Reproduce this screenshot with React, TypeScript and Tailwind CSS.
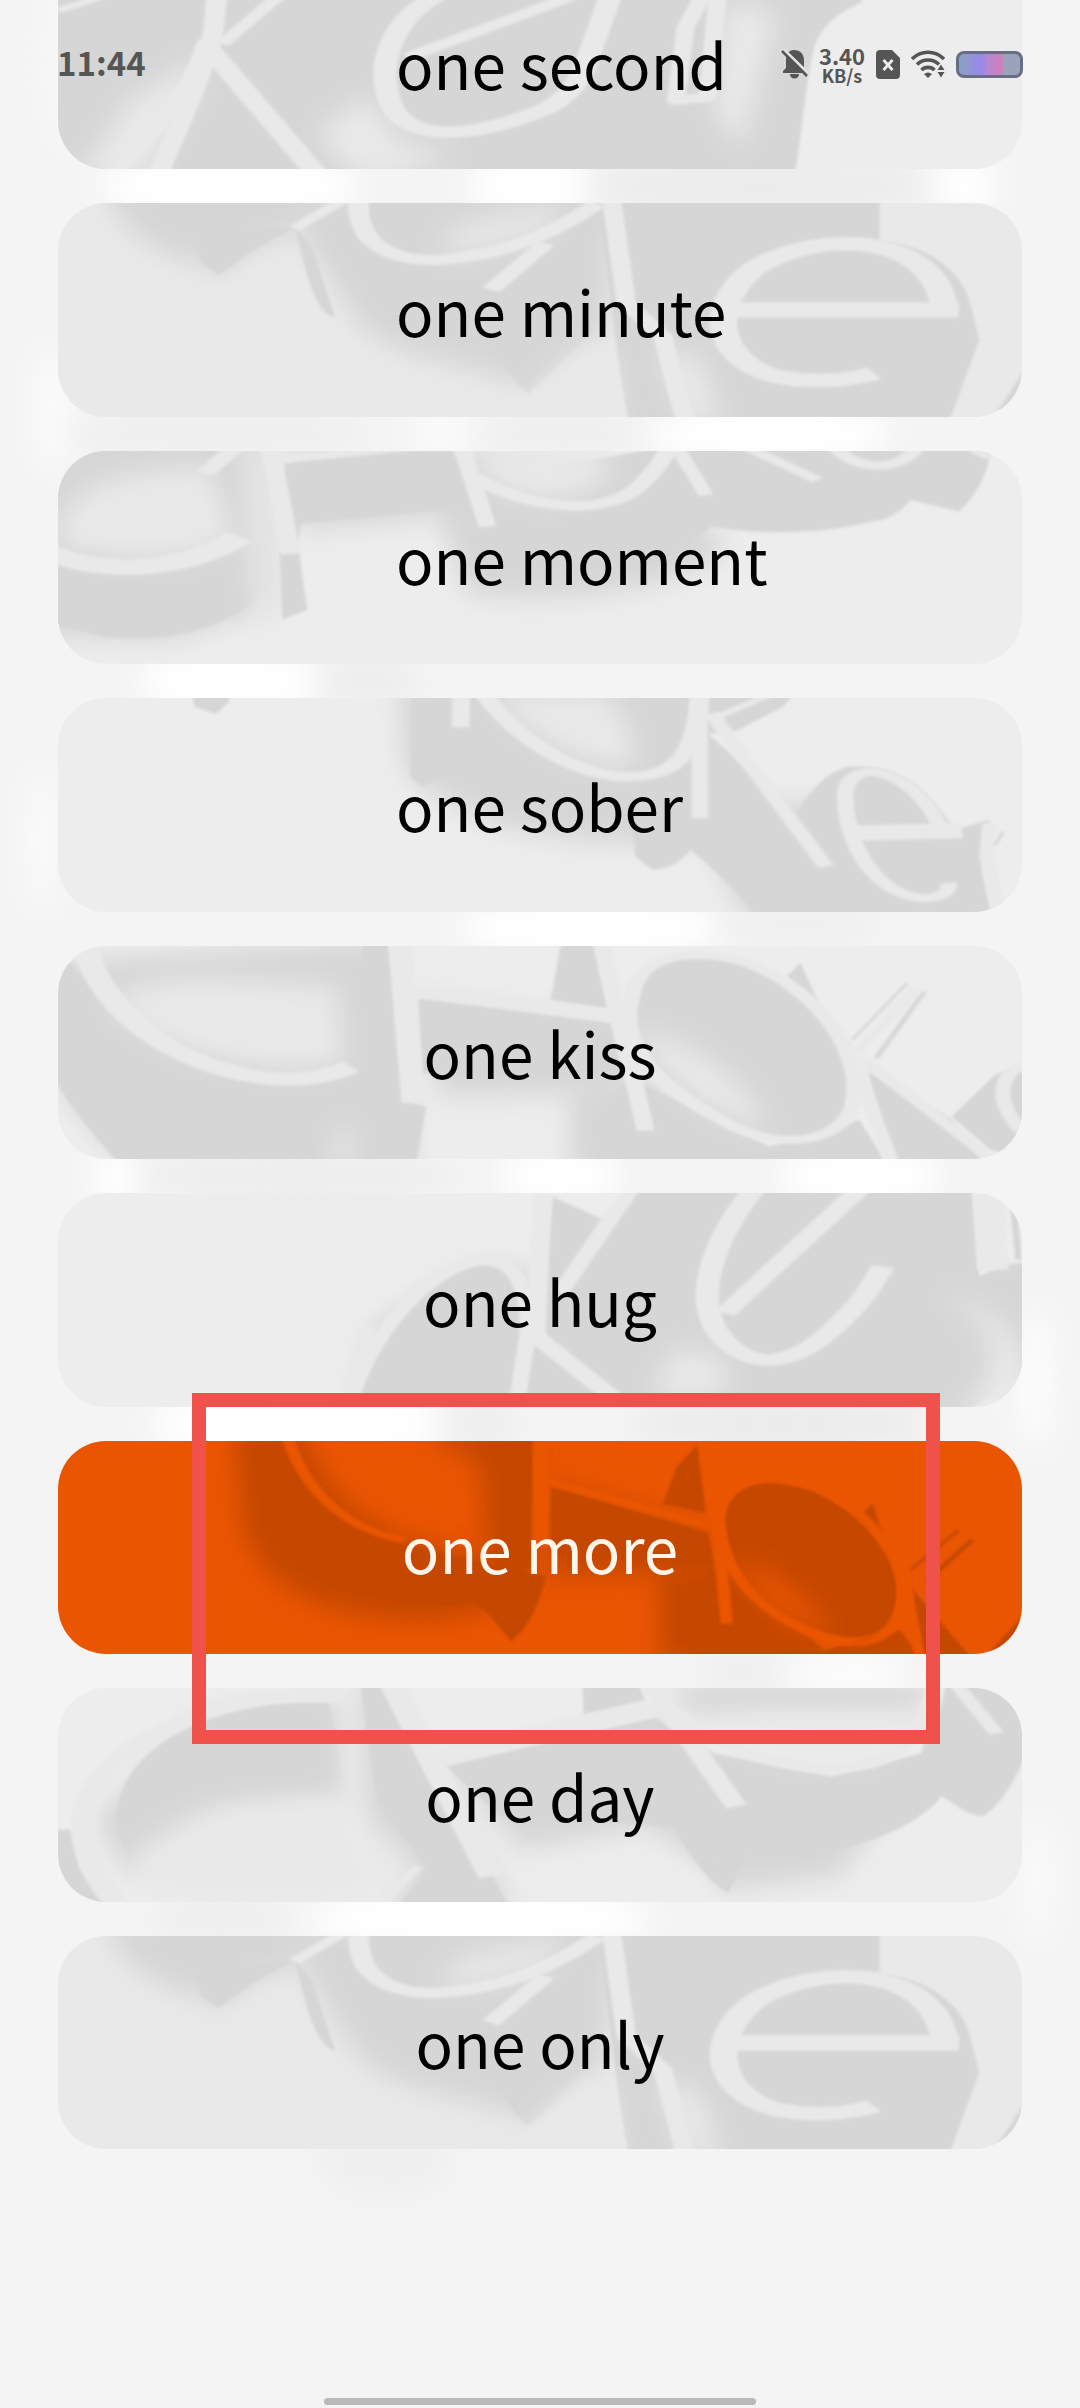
import React from "react";

/* Layer kinds: s = soft shadow, d = crisp side face, g = soft glow,
   l = front face of a letter (stroke), t = thin groove (stroke). */
type Layer = ["s" | "d" | "g", string] | ["l" | "t", string, number];

type Art = { top: number; layers: Layer[] };

const second: Art = {
  top: -134,
  layers: [
    ["d", "M60,-150 L1254,-150 L1254,5 C1215,40 1195,80 1185,140 C1172,250 1168,400 1155,540 L60,540 Z"],
    ["g", "M150,430 L190,300 L290,180 L290,260 L210,540 L110,540 Z"],
    ["g", "M465,385 L540,290 L580,420 L660,470 L560,540 L500,500 Z"],
    ["g", "M1060,0 L1130,40 L1110,200 L1080,440 L1040,330 L1050,120 Z"],
    ["l", "M86,30 C105,15 130,5 150,-15", 16],
    ["l", "M317,-20 L312,90 C300,200 270,340 228,540", 30],
    ["l", "M300,120 C270,300 230,400 160,530", 22],
    ["l", "M325,130 L410,-20", 22],
    ["l", "M300,130 L470,540", 34],
    ["l", "M636,-15 C570,60 545,200 572,320 C600,430 700,410 800,320 C850,260 850,200 890,-20", 34],
    ["l", "M595,170 L835,-15", 26],
    ["l", "M1025,-20 L998,80 L984,300 L1030,290 L1045,-20", 26],
  ],
};

const minute: Art = {
  top: 129,
  layers: [
    ["s", "M150,60 L480,60 L440,220 C400,230 360,260 325,340 L270,300 C210,260 170,200 150,60 Z"],
    ["d", "M285,220 L430,200 L370,270 L320,345 L295,310 Z"],
    ["s", "M430,110 L900,60 L880,520 L770,680 C700,620 560,600 520,480 L450,260 Z"],
    ["d", "M430,200 L455,260 L489,472 C470,470 455,400 445,320 Z"],
    ["d", "M520,110 L860,110 L860,520 L770,700 C740,660 730,560 690,500 C600,420 540,300 510,150 Z"],
    ["d", "M870,110 L1280,110 L1280,245 C1350,250 1400,340 1410,420 L1425,540 L1380,790 L915,790 L900,600 Z"],
    ["d", "M1500,600 L1440,790 L1500,790 Z"],
    ["g", "M850,560 L885,560 L905,790 L740,790 L775,700 Z"],
    ["g", "M630,270 L680,190 L830,129 L790,220 L700,270 Z"],
    ["g", "M960,560 L1020,600 L1050,790 L1000,790 Z"],
    ["l", "M500,120 L430,205", 20],
    ["l", "M524,110 C515,250 570,305 640,300 C730,285 800,230 870,130", 30],
    ["l", "M795,250 L715,390", 28],
    ["l", "M890,110 L912,430 L965,530 L1000,800", 28],
    ["l", "M1375,450 C1360,210 1180,210 1095,330 C1030,440 1040,600 1130,650 C1180,670 1230,665 1272,640", 40],
    ["l", "M1065,450 L1395,450", 46],
    ["l", "M1500,480 C1460,600 1430,700 1400,800", 44],
  ],
};

const moment: Art = {
  top: 93,
  layers: [
    ["s", "M60,70 L390,70 L400,560 L250,660 L60,650 Z"],
    ["d", "M60,70 L335,70 L315,140 C200,130 120,180 60,300 Z"],
    ["d", "M60,430 L200,465 L350,375 L372,545 C310,640 230,670 150,650 L60,600 Z"],
    ["g", "M90,300 C120,180 210,140 310,150 L340,360 C270,430 160,420 90,380 Z"],
    ["g", "M355,93 L385,93 L400,620 L375,640 Z"],
    ["s", "M410,110 L660,80 L960,200 L1060,380 C1000,520 800,560 680,520 L640,290 L440,330 Z"],
    ["d", "M415,130 L600,93 L660,93 L690,270 C600,270 520,300 440,310 L430,400 L415,400 Z"],
    ["d", "M408,400 L436,390 L448,570 L412,600 Z"],
    ["d", "M690,180 L1000,70 L1442,70 C1440,160 1420,230 1395,275 L1325,240 C1310,280 1290,300 1270,305 C1190,345 1100,345 1035,320 C1020,380 860,400 690,370 L700,300 Z"],
    ["g", "M690,93 L885,93 L880,190 L800,240 L720,200 Z"],
    ["l", "M300,160 L345,80", 28],
    ["l", "M70,395 C150,470 270,455 350,350", 46],
    ["l", "M394,80 L425,402", 28],
    ["l", "M410,118 L590,80", 22],
    ["l", "M673,80 L710,320", 26],
    ["l", "M690,170 C770,270 880,290 930,200 C955,150 965,120 975,80", 28],
    ["l", "M985,80 L1028,225", 22],
    ["l", "M1085,80 L1190,180", 20],
    ["l", "M1215,80 C1240,150 1310,160 1335,80", 24],
    ["l", "M1415,90 L1440,112", 16],
  ],
};

const sober: Art = {
  top: 84,
  layers: [
    ["d", "M280,70 L335,70 L335,95 L315,132 L285,110 Z"],
    ["s", "M580,40 L900,60 L1010,520 C900,520 800,520 720,460 L620,360 L590,300 Z"],
    ["s", "M1000,400 L1200,400 L1200,760 L1090,760 Z"],
    ["d", "M600,60 L1160,60 L1140,110 L1065,190 L1030,190 L1160,430 C1180,360 1200,310 1235,290 C1330,280 1360,400 1390,480 L1440,450 L1430,600 L1445,760 L1110,760 C1070,660 1040,600 1005,540 C990,580 970,600 950,600 L925,560 C925,500 920,460 900,440 C820,440 730,340 680,290 L615,350 L598,320 Z"],
    ["g", "M720,70 L885,70 L920,200 L920,290 C850,290 770,200 720,84 Z"],
    ["l", "M672,70 L671,172", 26],
    ["l", "M700,60 C760,230 850,325 920,320 C990,315 1015,240 1018,70", 28],
    ["l", "M1018,70 L1019,445", 24],
    ["l", "M1035,130 L1202,590", 24],
    ["l", "M1040,145 L1125,70", 14],
    ["l", "M1240,490 L1400,482", 46],
    ["l", "M1370,480 C1330,290 1235,260 1230,370 C1230,560 1290,690 1350,685 C1372,680 1382,665 1380,640", 24],
    ["l", "M1440,460 L1436,560 L1455,750", 22],
    ["t", "M1460,485 L1448,525", 5],
  ],
};

const kiss: Art = {
  top: 78,
  layers: [
    ["s", "M60,130 L560,60 L600,540 L600,760 L200,760 L100,540 Z"],
    ["d", "M80,130 L105,130 C150,370 290,500 420,495 L515,470 L530,60 L565,60 L590,545 L621,560 L604,760 L190,760 C130,640 100,540 80,480 Z"],
    ["g", "M160,240 C250,130 380,200 490,200 L500,430 C400,470 240,420 160,240 Z"],
    ["g", "M500,600 L520,700 L480,740 Z"],
    ["s", "M610,230 L885,310 L920,520 L640,530 Z"],
    ["d", "M610,235 L890,310 L905,460 L615,460 Z"],
    ["d", "M818,60 L865,60 L885,265 L802,240 Z"],
    ["s", "M830,500 L960,480 L1000,760 L830,760 Z"],
    ["d", "M945,500 L1120,680 L1250,600 L1300,760 L860,760 L900,500 Z"],
    ["d", "M920,230 C930,100 1010,80 1090,130 C1200,220 1260,420 1240,560 C1220,680 1120,690 1050,600 C960,500 900,380 920,230 Z"],
    ["g", "M925,330 C1000,350 1080,480 1120,620 C1040,600 960,480 925,330 Z"],
    ["d", "M1262,450 L1385,600 L1435,740 L1300,740 Z"],
    ["d", "M1165,128 L1145,170 L1192,252 Z"],
    ["d", "M1448,465 L1385,590 L1440,690 L1500,720 L1500,430 Z"],
    ["t", "M1320,190 L1240,360", 5],
    ["t", "M1345,215 L1275,415", 8],
    ["l", "M122,60 C150,310 290,475 420,478 C460,478 490,460 512,440", 38],
    ["l", "M583,60 L602,548", 34],
    ["l", "M600,215 L890,290", 32],
    ["l", "M875,60 L940,632", 26],
    ["l", "M920,230 C930,100 1010,80 1090,130 C1200,220 1260,420 1240,560 C1220,680 1120,690 1050,600 C960,500 900,380 920,230 Z", 24],
    ["l", "M1245,440 L1300,740", 22],
    ["l", "M1250,410 L1445,720", 22],
    ["l", "M1245,400 L1335,205", 20],
    ["l", "M1500,430 C1450,450 1445,550 1490,640", 22],
  ],
};

const hug: Art = {
  top: 69,
  layers: [
    ["s", "M540,480 L640,340 L700,290 L780,300 L800,740 L510,740 Z"],
    ["d", "M515,740 C550,480 620,290 700,285 C745,290 765,380 762,520 L740,740 Z"],
    ["d", "M805,80 L880,150 L930,50 L1415,50 L1425,320 C1450,290 1470,275 1500,280 L1500,600 L1395,740 L760,740 L780,500 Z"],
    ["g", "M980,540 L1050,560 L1060,680 L950,690 Z"],
    ["g", "M1390,740 C1470,600 1460,480 1370,370 C1480,430 1500,560 1500,740 Z"],
    ["l", "M540,470 L520,600", 16],
    ["l", "M505,740 C530,500 630,275 710,272 C760,270 772,400 768,500 L750,740", 24],
    ["l", "M790,70 L780,520", 28],
    ["l", "M918,60 L815,370", 26],
    ["l", "M775,490 L915,720", 32],
    ["l", "M1100,50 C1030,230 1010,400 1050,500 C1090,600 1150,590 1205,490 C1250,410 1265,360 1285,290", 34],
    ["l", "M1255,50 L1055,430", 32],
    ["l", "M1437,50 L1445,300", 46],
    ["t", "M1475,110 L1482,270", 10],
  ],
};

const more: Art = {
  top: 183,
  layers: [
    ["s", "M340,130 L440,130 C470,360 560,470 640,500 L760,560 C750,660 700,720 620,720 C480,720 390,640 355,450 Z"],
    ["s", "M600,130 L780,130 L780,600 L710,600 L700,260 Z"],
    ["d", "M378,160 L405,160 C430,330 500,450 600,500 L795,590 C785,680 770,740 745,785 C725,740 710,690 690,670 C560,700 450,600 405,480 Z"],
    ["d", "M745,160 L778,160 L775,560 L725,600 Z"],
    ["s", "M800,310 L1030,450 L1040,580 L800,590 Z"],
    ["d", "M803,320 L1030,460 L1040,560 L803,520 Z"],
    ["d", "M1015,195 L1028,400 L965,372 L985,260 Z"],
    ["s", "M960,560 L1060,560 L1200,850 L960,850 Z"],
    ["d", "M1065,590 L1200,810 L1310,750 L1345,850 L1000,850 L1030,560 Z"],
    ["d", "M1055,420 C1060,290 1130,290 1190,340 C1260,410 1310,540 1305,650 C1300,790 1240,790 1190,750 C1100,680 1060,560 1055,420 Z"],
    ["g", "M1070,540 C1130,570 1180,660 1210,760 C1150,740 1090,640 1070,540 Z"],
    ["d", "M1325,620 L1420,850 L1345,850 Z"],
    ["d", "M1500,680 L1425,850 L1500,850 Z"],
    ["d", "M1270,370 L1250,410 L1287,480 Z"],
    ["t", "M1325,570 L1395,450", 6],
    ["t", "M1350,600 L1415,480", 9],
    ["l", "M418,160 C440,320 500,450 590,480", 18],
    ["l", "M788,160 L787,500", 24],
    ["l", "M800,305 L1035,440", 22],
    ["l", "M1033,200 L1058,732", 18],
    ["l", "M1046,420 C1050,280 1130,270 1195,330 C1270,400 1318,540 1313,650 C1308,810 1240,810 1185,765 C1095,690 1050,560 1046,420 Z", 16],
    ["l", "M1318,600 L1340,850", 14],
  ],
};

const day: Art = {
  top: 54,
  layers: [
    ["s", "M300,130 L500,90 L520,400 L350,420 L190,620 L140,450 Z"],
    ["d", "M80,480 L105,480 L120,600 L165,720 L80,720 Z"],
    ["d", "M280,170 C350,90 420,90 480,100 L500,330 C420,340 340,360 300,390 L190,560 C140,400 200,240 280,170 Z"],
    ["g", "M500,100 L520,60 L560,420 L600,600 L560,640 L500,400 Z"],
    ["g", "M230,700 L190,560 L300,420 L500,380 L560,640 L500,720 Z"],
    ["s", "M525,40 L560,40 L750,720 L560,720 L610,600 L540,450 Z"],
    ["d", "M525,40 L555,40 L750,740 L565,740 L625,600 L550,400 Z"],
    ["s", "M655,290 L980,140 L1080,640 L940,470 L760,540 Z"],
    ["d", "M650,290 L950,140 L1040,250 L1210,320 L1340,250 L1372,40 L1500,40 L1500,220 C1480,320 1460,400 1430,440 C1400,430 1390,400 1370,380 C1330,480 1230,570 1085,560 L1060,670 C1020,620 1000,540 980,470 L730,440 Z"],
    ["s", "M1050,300 L1300,400 L1220,620 L1050,660 Z"],
    ["d", "M848,40 L930,40 L940,95 L850,140 Z"],
    ["s", "M980,40 L1360,40 L1330,130 L1000,130 Z"],
    ["g", "M1030,190 C1100,130 1260,130 1330,150 C1310,270 1200,310 1030,190 Z"],
    ["l", "M500,80 C300,50 130,250 124,450 C120,580 160,690 200,760", 38],
    ["l", "M570,40 L715,620", 36],
    ["l", "M640,260 L950,115", 54],
    ["l", "M945,40 L1072,410", 32],
    ["l", "M970,110 C1060,270 1200,330 1280,270 C1340,210 1355,130 1362,40", 30],
    ["l", "M1390,40 L1450,190", 22],
    ["l", "M610,590 L560,690", 14],
  ],
};

type Entry = { label: string; art: Art; indent?: boolean; active?: boolean };

const entries: Entry[] = [
  { label: "one second", art: second, indent: true },
  { label: "one minute", art: minute, indent: true },
  { label: "one moment", art: moment, indent: true },
  { label: "one sober", art: sober, indent: true },
  { label: "one kiss", art: kiss },
  { label: "one hug", art: hug },
  { label: "one more", art: more, active: true },
  { label: "one day", art: day },
  { label: "one only", art: minute },
];

function CardArt({ art, active }: { art: Art; active?: boolean }) {
  const face = active ? "#ea5502" : "#e9e9e9";
  const side = active ? "#c54700" : "#d6d6d6";
  return (
    <svg
      aria-hidden="true"
      className="absolute inset-0 h-full w-full"
      viewBox={`86 ${art.top} 1401 641`}
      preserveAspectRatio="none"
    >
      {art.layers.map((layer, i) => {
        const [kind, d, width] = layer;
        if (kind === "l" || kind === "t") {
          return (
            <path
              key={i}
              d={d}
              fill="none"
              stroke={kind === "l" ? face : side}
              strokeWidth={width}
              strokeLinejoin="round"
              filter="url(#edge)"
            />
          );
        }
        return (
          <path
            key={i}
            d={d}
            fill={kind === "g" ? face : side}
            filter={kind === "d" ? "url(#edge)" : "url(#soft)"}
          />
        );
      })}
    </svg>
  );
}

/* [cx, cy, rx, ry, colour] of the light and shade that shows between the cards */
const ambient: [number, number, number, number, string][] = [
  [75, 60, 30, 90, "#f8f8f8"],
  [230, 186, 130, 36, "#ffffff"],
  [530, 186, 60, 34, "#ffffff"],
  [760, 186, 170, 30, "#ececec"],
  [965, 186, 32, 26, "#ffffff"],
  [52, 410, 18, 60, "#fbfbfb"],
  [220, 434, 150, 22, "#efefef"],
  [440, 430, 30, 30, "#fafafa"],
  [560, 434, 80, 20, "#efefef"],
  [770, 434, 120, 32, "#ffffff"],
  [230, 682, 90, 36, "#ffffff"],
  [370, 682, 50, 26, "#eeeeee"],
  [42, 840, 14, 70, "#fbfbfb"],
  [590, 928, 130, 34, "#ffffff"],
  [800, 925, 80, 24, "#f0f0f0"],
  [115, 1178, 22, 30, "#ffffff"],
  [300, 1176, 160, 22, "#ededed"],
  [560, 1176, 60, 32, "#ffffff"],
  [860, 1176, 80, 34, "#ffffff"],
  [300, 1424, 150, 40, "#ffffff"],
  [480, 1424, 40, 26, "#efefef"],
  [780, 1424, 150, 24, "#ebebeb"],
  [1035, 1380, 20, 70, "#fcfcfc"],
  [740, 1672, 40, 20, "#efefef"],
  [850, 1674, 60, 26, "#fcfcfc"],
  [220, 1918, 70, 24, "#efefef"],
  [480, 1918, 170, 36, "#ffffff"],
  [1038, 1880, 16, 60, "#fafafa"],
  [385, 2160, 70, 40, "#f0f0f0"],
];

function Ambient() {
  return (
    <svg
      aria-hidden="true"
      className="absolute inset-0 h-full w-full"
      viewBox="0 0 1080 2408"
      preserveAspectRatio="none"
    >
      <defs>
        <filter id="soft" x="-50%" y="-50%" width="200%" height="200%">
          <feGaussianBlur stdDeviation="18 38" />
        </filter>
        <filter
          id="edge"
          filterUnits="userSpaceOnUse"
          x="0"
          y="-250"
          width="1600"
          height="1200"
        >
          <feGaussianBlur stdDeviation="2 4" />
        </filter>
        <filter id="haze" x="-100%" y="-100%" width="300%" height="300%">
          <feGaussianBlur stdDeviation="14" />
        </filter>
      </defs>
      {ambient.map(([cx, cy, rx, ry, fill], i) => (
        <ellipse key={i} cx={cx} cy={cy} rx={rx} ry={ry} fill={fill} filter="url(#haze)" />
      ))}
    </svg>
  );
}

function BellOff() {
  return (
    <svg aria-label="Muted" className="h-[30px] w-[27px]" viewBox="0 0 27 30">
      <path
        fill="#555"
        d="M13 1c6 0 10 4 10 10v8l2 5H2v-2l3-3v-8C5 5 8 1 13 1ZM9 25h9c0 3-2 4.500-4.500 4.500S9 28 9 25Z"
      />
      <path stroke="#e3e3e3" strokeWidth="3" d="M2 0l26 25" />
      <path stroke="#555" strokeWidth="2.500" d="M1 2l25 25" />
    </svg>
  );
}

function SimMissing() {
  return (
    <svg aria-label="No SIM" className="h-[29px] w-6" viewBox="0 0 24 29">
      <path
        fill="#555"
        d="M4 0h12l8 8v17c0 2.500-1.500 4-4 4H4c-2.500 0-4-1.500-4-4V4c0-2.500 1.500-4 4-4Z"
      />
      <path stroke="#eee" strokeWidth="2.800" d="M7.500 10l9 10M16.500 10l-9 10" />
    </svg>
  );
}

function Wifi() {
  return (
    <svg aria-label="Wi-Fi" className="h-7 w-[34px]" viewBox="0 0 34 28">
      <g fill="none" stroke="#555" strokeWidth="3.600">
        <path d="M1 9C10 0 24 0 33 9" />
        <path d="M6 14.500c6-6 16-6 22 0" />
        <path d="M10.500 20c3.500-3.500 9.500-3.500 13 0" />
      </g>
      <path fill="#555" d="M13 24c2.500-2 5.500-2 8 0l-4 4Z" />
      <path fill="#555" d="M30 14.500l3.500 5.500h-7ZM30 27.500l-3.500-5.500h7Z" />
    </svg>
  );
}

function StatusBar() {
  return (
    <header className="absolute inset-x-0 top-[42px] flex h-11 items-center justify-between px-[57px] font-['Noto_Sans_CJK_SC',sans-serif] font-bold text-[#555]">
      <time className="-mt-[5px] text-[33px] leading-10">11:44</time>
      <div className="flex items-center gap-[11px]">
        <BellOff />
        <div className="flex flex-col items-center text-[22px] leading-[22px]">
          <span>3.40</span>
          <span className="text-[18px] leading-[18px]">KB/s</span>
        </div>
        <SimMissing />
        <Wifi />
        <div
          role="img"
          aria-label="Battery"
          className="h-[27px] w-[67px] rounded-lg border-3 border-[#686d84] bg-linear-to-r from-[#8c9ccb] from-12% via-[#9a86ea] via-35% to-[#9aa2bc] to-72%"
        >
          <div className="ml-[26px] h-full w-[18px] rounded-sm bg-linear-to-r from-[#b288d8] to-[#d07fb8]" />
        </div>
      </div>
    </header>
  );
}

export default function App() {
  return (
    <div className="relative flex min-h-screen flex-col overflow-hidden bg-[#f4f4f4] font-['Noto_Sans_CJK_SC',sans-serif]">
      <Ambient />
      <main className="-mt-[44px] flex flex-1 flex-col px-[58px] pb-[249px]">
        <ul className="grid flex-1 auto-rows-fr gap-[34px]">
          {entries.map(({ label, art, indent, active }) => (
            <li key={label} className={active ? "relative z-10" : "relative"}>
              <button
                type="button"
                className={`relative flex h-full min-h-[160px] w-full items-center overflow-hidden rounded-[48px] text-[62px] leading-[96px] ${
                  indent ? "justify-start pl-[338px]" : "justify-center"
                } ${
                  active
                    ? "bg-[#ea5502] text-[#fff5ea]"
                    : art === minute
                      ? "bg-[#e9e9e9] text-black"
                      : "bg-[#ededed] text-black"
                }`}
              >
                <CardArt art={art} active={active} />
                <span className="relative">{label}</span>
              </button>
              {active && (
                <div className="pointer-events-none absolute -top-[48px] right-[82px] -bottom-[90px] left-[134px] border-[14px] border-[#ef524b]" />
              )}
            </li>
          ))}
        </ul>
      </main>
      <StatusBar />
      <div className="relative mx-auto mb-[3px] h-[7px] w-[40%] rounded-full bg-[#b9b9b9]" />
    </div>
  );
}
